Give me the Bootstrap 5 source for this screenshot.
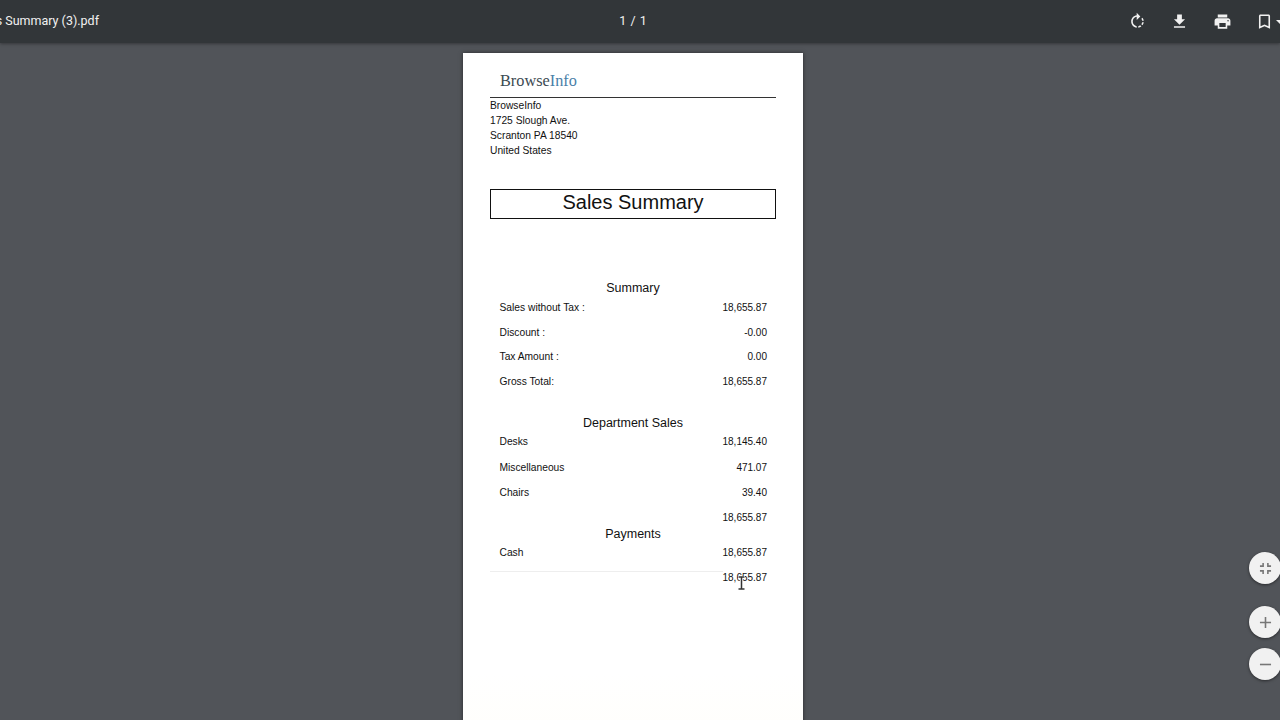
<!DOCTYPE html>
<html lang="en">
<head>
  <meta charset="UTF-8">
  <title>Sales Summary (3).pdf</title>
  <link href="https://cdn.jsdelivr.net/npm/bootstrap@5.3.3/dist/css/bootstrap.min.css" rel="stylesheet">
  <style>
    html, body { height: 720px; overflow: hidden; }
    body { background: #515459; font-family: "Liberation Sans", Arial, sans-serif; color: #111; }
    .toolbar { height: 43px; background: #323639; color: #f1f1f1; font-family: Roboto, sans-serif; font-size: 12.5px; box-shadow: 0 1px 3px rgba(0,0,0,.35); position: relative; }
    .tb-left { width: 150px; padding-right: 51px; white-space: nowrap; }
    .tb-pages { word-spacing: 1px; }
    .tb-right { width: 164px; }
    .tb-btn { flex: 0 0 42.5px; }
    .tb-btn svg { width: 19px; height: 19px; fill: #f1f1f1; }
    .tb-caret { position: absolute; left: 32.5px; top: 8px; border: 4px solid transparent; border-top-color: #f1f1f1; border-bottom-width: 0; }
    .viewer { height: 677px; padding: 10px 14px 0 0; }
    .sheet { width: 340px; height: 700px; background: linear-gradient(#fff 620px, #fffefa 100%); box-shadow: 0 0 4px rgba(0,0,0,.5); padding: 0 27px; font-size: 10px; }
    .logo { height: 45px; border-bottom: 1px solid #333; padding: 18px 0 0 10px; font-family: "Liberation Serif", serif; font-size: 16.3px; line-height: 20px; color: #3c4a52; }
    .logo span { color: #4a80a8; }
    .address { font-size: 10.25px; line-height: 15px; height: 91px; }
    .doc-title { height: 30px; border: 1px solid #111; font-size: 20px; line-height: 24px; text-align: center; margin-bottom: 59px; }
    .sec-title { font-size: 12.5px; line-height: 20px; height: 20px; text-align: center; margin-bottom: 1.5px; }
    .sec-first { margin-bottom: 2px; }
    .sec-dept { margin-top: 14.2px; }
    .line { height: 24.7px; line-height: 15px; padding: 0 9px 0 9.5px; }
    .line > span:first-child:not(:last-child) { font-size: 10.25px; }
    .line-dept { height: 25.3px; }
    .line-total { height: 13.5px; }
    .line.rule-line { padding: 0 9px 0 0; }
    .rule-line .rule { height: 1px; background: #eee; margin-top: .5px; }
    .fab-box { position: absolute; left: 1249px; top: 552px; }
    .fab { width: 32px; height: 32px; background: #f1f1f1; box-shadow: 0 1px 3px rgba(0,0,0,.5); }
    .fab svg { width: 19px; height: 19px; fill: #777; }
    .fab-gap-lg { margin-bottom: 22px; }
    .fab-gap-sm { margin-bottom: 10px; }
    .cursor { position: absolute; left: 737px; top: 576px; width: 9px; height: 14px; }
  </style>
</head>
<body>

  <!-- Toolbar -->
  <div class="toolbar d-flex align-items-center">
    <div class="tb-left d-flex justify-content-end overflow-hidden"><span>Sales Summary (3).pdf</span></div>
    <div class="tb-pages flex-grow-1 text-center">1 / 1</div>
    <div class="tb-right d-flex overflow-hidden">
      <div class="tb-btn d-flex justify-content-center"><svg viewBox="0 0 24 24"><path d="M15.55 5.55L11 1v3.07C7.06 4.56 4 7.92 4 12s3.05 7.44 7 7.93v-2.02c-2.84-.48-5-2.94-5-5.91s2.16-5.43 5-5.91V10l4.55-4.45zM19.93 11c-.17-1.39-.72-2.73-1.62-3.89l-1.42 1.42c.54.75.88 1.6 1.02 2.47h2.02zM13 17.9v2.02c1.39-.17 2.74-.71 3.9-1.61l-1.44-1.44c-.75.54-1.59.89-2.46 1.03zm3.89-2.42l1.42 1.41c.9-1.16 1.45-2.5 1.62-3.89h-2.02c-.14.87-.48 1.72-1.02 2.48z"/></svg></div>
      <div class="tb-btn d-flex justify-content-center"><svg viewBox="0 0 24 24"><path d="M19 9h-4V3H9v6H5l7 7 7-7zM5 18v2h14v-2H5z"/></svg></div>
      <div class="tb-btn d-flex justify-content-center"><svg viewBox="0 0 24 24"><path d="M19 8H5c-1.66 0-3 1.34-3 3v6h4v4h12v-4h4v-6c0-1.66-1.34-3-3-3zm-3 11H8v-5h8v5zm3-7c-.55 0-1-.45-1-1s.45-1 1-1 1 .45 1 1-.45 1-1 1zm-1-9H6v4h12V3z"/></svg></div>
      <div class="tb-btn d-flex justify-content-center position-relative"><svg viewBox="0 0 24 24"><path d="M17 3H7c-1.1 0-1.99.9-1.99 2L5 21l7-3 7 3V5c0-1.1-.9-2-2-2zm0 15l-5-2.18L7 18V5h10v13z"/></svg><span class="tb-caret"></span></div>
    </div>
  </div>

  <!-- PDF page -->
  <div class="viewer overflow-hidden">
    <div class="sheet mx-auto">
      <div class="logo">Browse<span>Info</span></div>
      <div class="address">BrowseInfo<br>1725 Slough Ave.<br>Scranton PA 18540<br>United States</div>
      <div class="doc-title">Sales Summary</div>

      <div class="sec-title sec-first">Summary</div>
      <div class="line d-flex justify-content-between"><span>Sales without Tax :</span><span>18,655.87</span></div>
      <div class="line d-flex justify-content-between"><span>Discount :</span><span>-0.00</span></div>
      <div class="line d-flex justify-content-between"><span>Tax Amount :</span><span>0.00</span></div>
      <div class="line d-flex justify-content-between"><span>Gross Total:</span><span>18,655.87</span></div>

      <div class="sec-title sec-dept">Department Sales</div>
      <div class="line line-dept d-flex justify-content-between"><span>Desks</span><span>18,145.40</span></div>
      <div class="line line-dept d-flex justify-content-between"><span>Miscellaneous</span><span>471.07</span></div>
      <div class="line line-dept d-flex justify-content-between"><span>Chairs</span><span>39.40</span></div>
      <div class="line line-total d-flex justify-content-end"><span>18,655.87</span></div>

      <div class="sec-title">Payments</div>
      <div class="line d-flex justify-content-between"><span>Cash</span><span>18,655.87</span></div>
      <div class="line rule-line d-flex"><div class="rule flex-grow-1"></div><span>18,655.87</span></div>
    </div>
  </div>

  <!-- Zoom buttons -->
  <div class="fab-box d-flex flex-column">
    <div class="fab fab-gap-lg rounded-circle d-flex align-items-center justify-content-center"><svg viewBox="0 0 24 24"><path d="M5 16h3v3h2v-5H5v2zm3-8H5v2h5V5H8v3zm6 11h2v-3h3v-2h-5v5zm2-11V5h-2v5h5V8h-3z"/></svg></div>
    <div class="fab fab-gap-sm rounded-circle d-flex align-items-center justify-content-center"><svg viewBox="0 0 24 24"><path d="M19 13h-6v6h-2v-6H5v-2h6V5h2v6h6v2z"/></svg></div>
    <div class="fab rounded-circle d-flex align-items-center justify-content-center"><svg viewBox="0 0 24 24"><path d="M19 13H5v-2h14v2z"/></svg></div>
  </div>

  <!-- Text cursor -->
  <svg class="cursor" viewBox="0 0 9 14"><path d="M1 1h7M1 13h7M4.5 1v12" stroke="#fff" stroke-width="3.4" fill="none"/><path d="M1.5 1h6M1.5 13h6M4.5 1v12" stroke="#333" stroke-width="1.5" fill="none"/></svg>

  <script src="https://cdn.jsdelivr.net/npm/bootstrap@5.3.3/dist/js/bootstrap.bundle.min.js"></script>
</body>
</html>
